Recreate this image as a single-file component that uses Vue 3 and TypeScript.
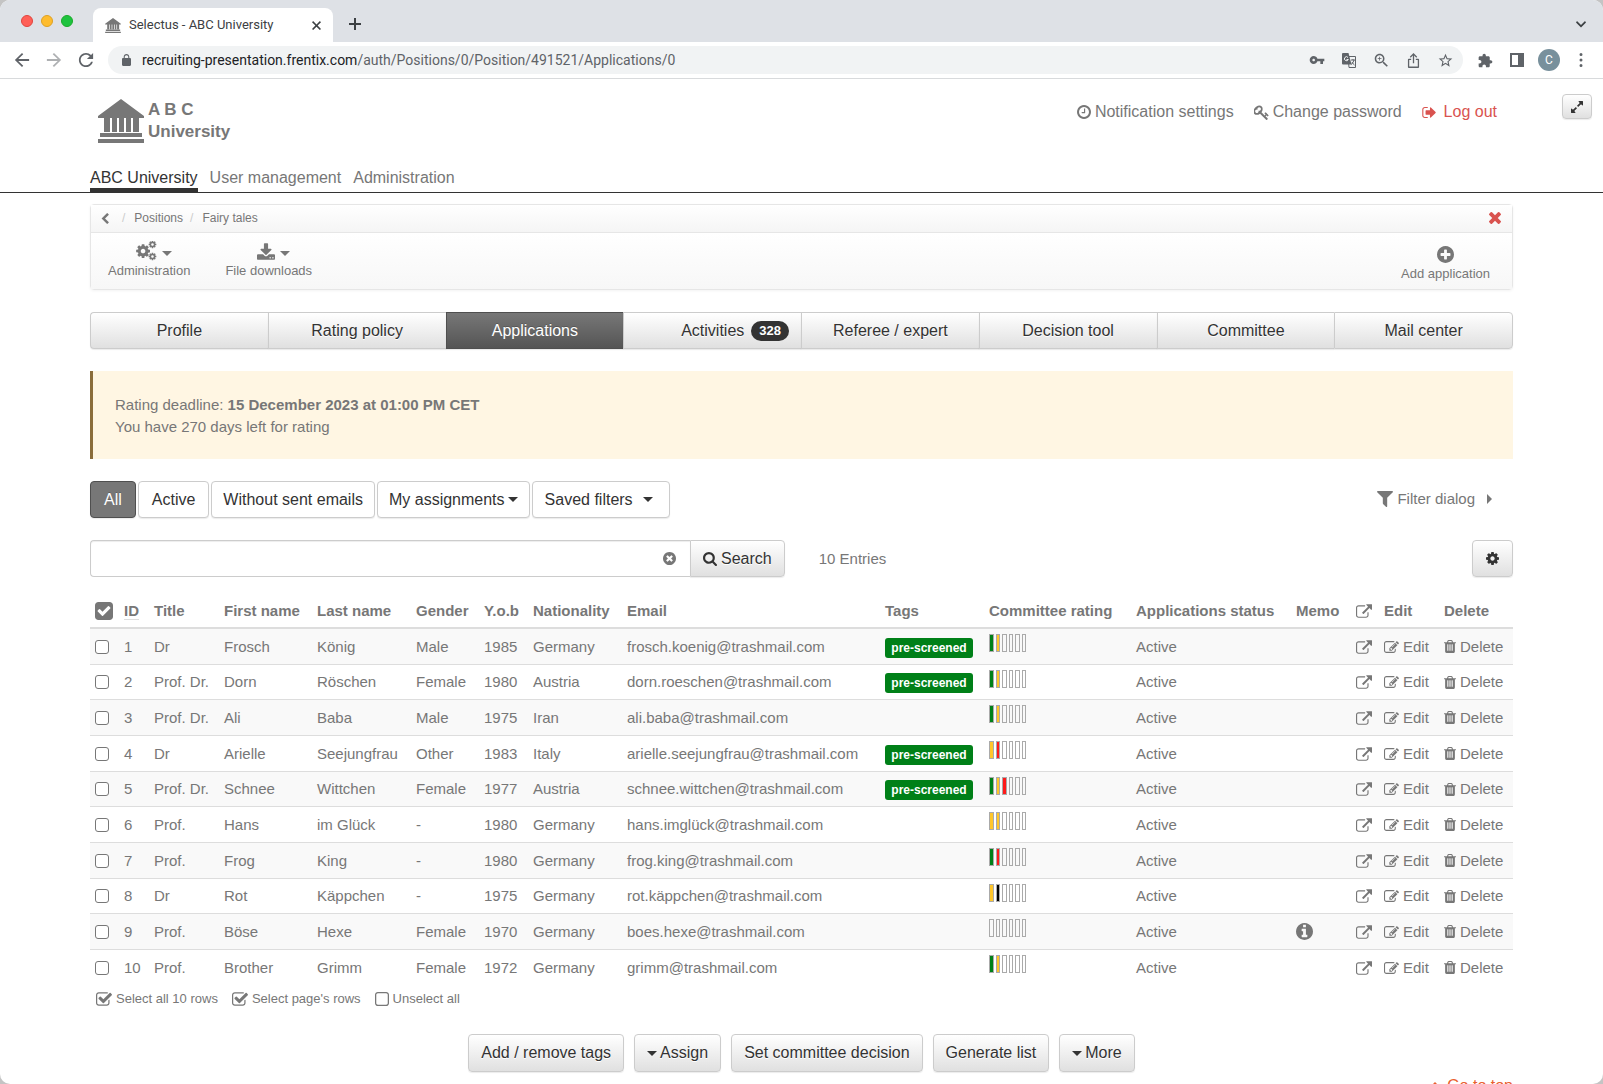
<script setup lang="ts">
import { h, ref } from 'vue'

interface Glyph {
  box: string
  path: string
}

interface Application {
  id: number
  title: string
  first: string
  last: string
  gender: string
  year: number
  nationality: string
  email: string
  tag: boolean
  rating: string[]
  memo: boolean
  selected: boolean
}

const disc = 'q0 209-103 385.5t-279.5 279.5-385.5 103-385.5-103-279.5-279.5-103-385.5 103-385.5 279.5-279.5 385.5-103 385.5 103 279.5 279.5 103 385.5z'

const gear = 'M1152 896q0-106-75-181t-181-75-181 75-75 181 75 181 181 75 181-75 75-181zm512-109v222q0 12-8 23t-20 13l-185 28q-19 54-39 91 35 50 107 138 10 12 10 25t-9 23q-27 37-99 108t-94 71q-12 0-26-9l-138-108q-44 23-91 38-16 136-29 186-7 28-36 28h-222q-14 0-24.5-8.5t-11.5-21.5l-28-184q-49-16-90-37l-141 107q-10 9-25 9-14 0-25-11-126-114-165-168-7-10-7-23 0-12 8-23 15-21 51-66.5t54-70.5q-27-50-41-99l-183-27q-13-2-21-12.5t-8-23.5v-222q0-12 8-23t19-13l186-28q14-46 39-92-40-57-107-138-10-12-10-24 0-10 9-23 26-36 98.5-107.5t94.5-71.5q13 0 26 10l138 107q44-23 91-38 16-136 29-186 7-28 36-28h222q14 0 24.5 8.5t11.5 21.5l28 184q49 16 90 37l142-107q9-9 24-9 13 0 25 10 129 119 165 170 7 8 7 22 0 12-8 23-15 21-51 66.5t-54 70.5q26 50 41 98l183 28q13 2 21 12.5t8 23.5z'

const glyphs: Record<string, Glyph> = {
  bank: { box: '0 0 46 44', path: 'M23 0L0 17v2h46v-2zM6 19h6v14H6zm8 0h5v14h-5zm7 0h5v14h-5zm7 0h5v14h-5zm7 0h6v14h-6zM2 34h42v4H2zM0 40h46v4H0z' },
  clock: { box: '128 128 1536 1536', path: 'M1024 544v448q0 14-9 23t-23 9h-320q-14 0-23-9t-9-23v-64q0-14 9-23t23-9h224v-352q0-14 9-23t23-9h64q14 0 23 9t9 23zm416 352q0-148-73-273t-198-198-273-73-273 73-198 198-73 273 73 273 198 198 273 73 273-73 198-198 73-273zm224 0' + disc },
  key: { box: '64 64 1664 1664', path: 'M832 512q0-80-56-136t-136-56-136 56-56 136q0 42 19 83-41-19-83-19-80 0-136 56t-56 136 56 136 136 56 136-56 56-136q0-42-19-83 41 19 83 19 80 0 136-56t56-136zm851 704q0 17-49 66t-66 49q-9 0-28.5-16t-36.5-33-38.5-40-24.5-26l-96 96 220 220q28 28 28 68 0 42-39 81t-81 39q-40 0-68-28l-671-671q-176 131-365 131-163 0-265.5-102.5t-102.5-265.5q0-160 95-313t248-248 313-95q163 0 265.5 102.5t102.5 265.5q0 189-131 365l355 355 96-96q-3-3-26-24.5t-40-38.5-33-36.5-16-28.5q0-17 49-66t66-49q13 0 23 10 6 6 46 44.5t82 79.5 86.5 86 73 78 28.5 41z' },
  signOut: { box: '64 256 1568 1280', path: 'M704 1440q0 4 1 20t.5 26.5-3 23.5-10 19.5-20.5 6.5h-320q-119 0-203.5-84.5t-84.5-203.5v-704q0-119 84.5-203.5t203.5-84.5h320q13 0 22.5 9.5t9.5 22.5q0 4 1 20t.5 26.5-3 23.5-10 19.5-20.5 6.5h-320q-66 0-113 47t-47 113v704q0 66 47 113t113 47h312l11.5 1 11.5 3 8 5.5 7 9 2 13.5zm928-544q0 26-19 45l-544 544q-19 19-45 19t-45-19-19-45v-288h-448q-26 0-45-19t-19-45v-384q0-26 19-45t45-19h448v-288q0-26 19-45t45-19 45 19l544 544q19 19 19 45z' },
  expand: { box: '128 128 1536 1536', path: 'M883 1056q0 13-10 23l-332 332 144 144q19 19 19 45t-19 45-45 19h-448q-26 0-45-19t-19-45v-448q0-26 19-45t45-19 45 19l144 144 332-332q10-10 23-10t23 10l114 114q10 10 10 23zm781-864v448q0 26-19 45t-45 19-45-19l-144-144-332 332q-10 10-23 10t-23-10l-114-114q-10-10-10-23t10-23l332-332-144-144q-19-19-19-45t19-45 45-19h448q26 0 45 19t19 45z' },
  chevronLeft: { box: '346 26 1100 1612', path: 'M1427 301l-531 531 531 531q19 19 19 45t-19 45l-166 166q-19 19-45 19t-45-19l-742-742q-19-19-19-45t19-45l742-742q19-19 45-19t45 19l166 166q19 19 19 45t-19 45z' },
  times: { box: '302 366 1188 1188', path: 'M1490 1322q0 40-28 68l-136 136q-28 28-68 28t-68-28l-294-294-294 294q-28 28-68 28t-68-28l-136-136q-28-28-28-68t28-68l294-294-294-294q-28-28-28-68t28-68l136-136q28-28 68-28t68 28l294 294 294-294q28-28 68-28t68 28l136 136q28 28 28 68t-28 68l-294 294 294 294q28 28 28 68z' },
  gear: { box: '128 128 1536 1536', path: gear },
  download: { box: '64 0 1664 1536', path: 'M1344 1344q0-26-19-45t-45-19-45 19-19 45 19 45 45 19 45-19 19-45zm256 0q0-26-19-45t-45-19-45 19-19 45 19 45 45 19 45-19 19-45zm128-224v320q0 40-28 68t-68 28h-1472q-40 0-68-28t-28-68v-320q0-40 28-68t68-28h465l135 136q58 56 136 56t136-56l136-136h464q40 0 68 28t28 68zm-325-569q17 41-14 70l-448 448q-18 19-45 19t-45-19l-448-448q-31-29-14-70 17-39 59-39h256v-448q0-26 19-45t45-19h256q26 0 45 19t19 45v448h256q42 0 59 39z' },
  plusCircle: { box: '128 128 1536 1536', path: 'M1344 960v-128q0-26-19-45t-45-19h-256v-256q0-26-19-45t-45-19h-128q-26 0-45 19t-19 45v256h-256q-26 0-45 19t-19 45v128q0 26 19 45t45 19h256v256q0 26 19 45t45 19h128q26 0 45-19t19-45v-256h256q26 0 45-19t19-45zm320-64' + disc },
  timesCircle: { box: '128 128 1536 1536', path: 'M1277 1122q0-26-19-45l-181-181 181-181q19-19 19-45 0-27-19-46l-90-90q-19-19-46-19-26 0-45 19l-181 181-181-181q-19-19-45-19-27 0-46 19l-90 90q-19 19-19 46 0 26 19 45l181 181-181 181q-19 19-19 45 0 27 19 46l90 90q19 19 46 19 26 0 45-19l181-181 181 181q19 19 45 19 27 0 46-19l90-90q19-19 19-46zm387-226' + disc },
  infoCircle: { box: '128 128 1536 1536', path: 'M1152 1376v-160q0-14-9-23t-23-9h-96v-512q0-14-9-23t-23-9h-320q-14 0-23 9t-9 23v160q0 14 9 23t23 9h96v320h-96q-14 0-23 9t-9 23v160q0 14 9 23t23 9h448q14 0 23-9t9-23zm-128-896v-160q0-14-9-23t-23-9h-192q-14 0-23 9t-9 23v160q0 14 9 23t23 9h192q14 0 23-9t9-23zm640 416' + disc },
  search: { box: '64 128 1664 1664', path: 'M1216 832q0-185-131.5-316.5t-316.5-131.5-316.5 131.5-131.5 316.5 131.5 316.5 316.5 131.5 316.5-131.5 131.5-316.5zm512 832q0 52-38 90t-90 38q-54 0-90-38l-343-342q-179 124-399 124-143 0-273.5-55.5t-225-150-150-225-55.5-273.5 55.5-273.5 150-225 225-150 273.5-55.5 273.5 55.5 225 150 150 225 55.5 273.5q0 220-124 399l343 343q37 37 37 90z' },
  filter: { box: '192 256 1408 1408', path: 'M1595 295q17 41-14 70l-493 493v742q0 42-39 59-13 5-25 5-27 0-45-19l-256-256q-19-19-19-45v-486l-493-493q-31-29-14-70 17-39 59-39h1280q42 0 59 39z' },
  external: { box: '0 0 1792 1536', path: 'M1408 928v320q0 119-84.5 203.5t-203.5 84.5h-832q-119 0-203.5-84.5t-84.5-203.5v-832q0-119 84.5-203.5t203.5-84.5h704q14 0 23 9t9 23v64q0 14-9 23t-23 9h-704q-66 0-113 47t-47 113v832q0 66 47 113t113 47h832q66 0 113-47t47-113v-320q0-14 9-23t23-9h64q14 0 23 9t9 23zm384-864v512q0 26-19 45t-45 19-45-19l-176-176-652 652q-10 10-23 10t-23-10l-114-114q-10-10-10-23t10-23l652-652-176-176q-19-19-19-45t19-45 45-19h512q26 0 45 19t19 45z' },
  edit: { box: '0 128 1792 1408', path: 'M888 1184l116-116-152-152-116 116v56h96v96h56zm440-720q-16-16-33 1l-350 350q-17 17-1 33t33-1l350-350q17-17 1-33zm80 594v190q0 119-84.5 203.5t-203.5 84.5h-832q-119 0-203.5-84.5t-84.5-203.5v-832q0-119 84.5-203.5t203.5-84.5h832q63 0 117 25 15 7 18 23 3 17-9 29l-49 49q-14 14-32 8-23-6-45-6h-832q-66 0-113 47t-47 113v832q0 66 47 113t113 47h832q66 0 113-47t47-113v-126q0-13 9-22l64-64q15-15 35-7t20 29zm-96-738l288 288-672 672h-288v-288zm444 132l-92 92-288-288 92-92q28-28 68-28t68 28l152 152q28 28 28 68t-28 68z' },
  trash: { box: '192 128 1408 1536', path: 'M704 1376v-704q0-14-9-23t-23-9h-64q-14 0-23 9t-9 23v704q0 14 9 23t23 9h64q14 0 23-9t9-23zm256 0v-704q0-14-9-23t-23-9h-64q-14 0-23 9t-9 23v704q0 14 9 23t23 9h64q14 0 23-9t9-23zm256 0v-704q0-14-9-23t-23-9h-64q-14 0-23 9t-9 23v704q0 14 9 23t23 9h64q14 0 23-9t9-23zm-544-992h448l-48-117q-7-9-17-11h-317q-10 2-17 11zm928 32v64q0 14-9 23t-23 9h-96v948q0 83-47 143.5t-113 60.5h-832q-66 0-113-58.5t-47-141.5v-952h-96q-14 0-23-9t-9-23v-64q0-14 9-23t23-9h309l70-167q15-37 54-63t79-26h320q40 0 79 26t54 63l70 167h309q14 0 23 9t9 23z' },
  checkSquare: { box: '128 128 1536 1536', path: 'M813 1299l614-614q19-19 19-45t-19-45l-102-102q-19-19-45-19t-45 19l-467 467-211-211q-19-19-45-19t-45 19l-102 102q-19 19-19 45t19 45l358 358q19 19 45 19t45-19zm851-883v960q0 119-84.5 203.5t-203.5 84.5h-960q-119 0-203.5-84.5t-84.5-203.5v-960q0-119 84.5-203.5t203.5-84.5h960q119 0 203.5 84.5t84.5 203.5z' },
  checkOutline: { box: '64 128 1664 1408', path: 'M1472 930v318q0 119-84.5 203.5t-203.5 84.5h-832q-119 0-203.5-84.5t-84.5-203.5v-832q0-119 84.5-203.5t203.5-84.5h832q63 0 117 25 15 7 18 23 3 17-9 29l-49 49q-10 10-23 10-3 0-9-2-23-6-45-6h-832q-66 0-113 47t-47 113v832q0 66 47 113t113 47h832q66 0 113-47t47-113v-254q0-13 9-22l64-64q10-10 23-10 6 0 12 3 20 8 20 29zm231-489l-814 814q-24 24-57 24t-57-24l-430-430q-24-24-24-57t24-57l110-110q24-24 57-24t57 24l263 263 647-647q24-24 57-24t57 24l110 110q24 24 24 57t-24 57z' },
  square: { box: '192 128 1408 1408', path: 'M1312 256h-832q-66 0-113 47t-47 113v832q0 66 47 113t113 47h832q66 0 113-47t47-113v-832q0-66-47-113t-113-47zm288 160v832q0 119-84.5 203.5t-203.5 84.5h-832q-119 0-203.5-84.5t-84.5-203.5v-832q0-119 84.5-203.5t203.5-84.5h832q119 0 203.5 84.5t84.5 203.5z' },
  chevronUp: { box: '0 0 12 8', path: 'M6 0l6 6-2 2-4-4-4 4-2-2z' },
  back: { box: '3 3 18 18', path: 'M20 11H7.83l5.59-5.59L12 4l-8 8 8 8 1.41-1.41L7.83 13H20v-2z' },
  forward: { box: '3 3 18 18', path: 'M4 11h12.17l-5.59-5.59L12 4l8 8-8 8-1.41-1.41L16.17 13H4v-2z' },
  reload: { box: '3 3 18 18', path: 'M17.65 6.35C16.2 4.9 14.21 4 12 4c-4.42 0-7.99 3.58-7.99 8s3.57 8 7.99 8c3.73 0 6.84-2.55 7.73-6h-2.08c-.82 2.33-3.04 4-5.65 4-3.31 0-6-2.69-6-6s2.69-6 6-6c1.66 0 3.14.69 4.22 1.78L13 11h7V4l-2.35 2.35z' },
  lock: { box: '4 1 16 21', path: 'M18 8h-1V6c0-2.76-2.24-5-5-5S7 3.24 7 6v2H6c-1.1 0-2 .9-2 2v10c0 1.1.9 2 2 2h12c1.1 0 2-.9 2-2V10c0-1.1-.9-2-2-2zm-2.9 0H8.9V6c0-1.71 1.39-3.1 3.1-3.1 1.71 0 3.1 1.39 3.1 3.1v2z' },
  password: { box: '0 0 24 24', path: 'M12.65 10C11.83 7.67 9.61 6 7 6c-3.31 0-6 2.69-6 6s2.69 6 6 6c2.61 0 4.83-1.67 5.65-4H17v4h4v-4h2v-4H12.65zM7 14c-1.1 0-2-.9-2-2s.9-2 2-2 2 .9 2 2-.9 2-2 2z' },
  zoom: { box: '2 2 20 20', path: 'M15.5 14h-.79l-.28-.27C15.41 12.59 16 11.11 16 9.5 16 5.91 13.09 3 9.5 3S3 5.91 3 9.5 5.91 16 9.5 16c1.61 0 3.09-.59 4.23-1.57l.27.28v.79l5 4.99L20.49 19l-4.99-5zm-6 0C7.01 14 5 11.99 5 9.5S7.01 5 9.5 5 14 7.01 14 9.5 11.99 14 9.5 14zm2.5-4h-2v2H9v-2H7V9h2V7h1v2h2v1z' },
  share: { box: '0 0 14 16', path: 'M7 0l4 4-1 1-2.300-2.300V11H6.300V2.700L4 5 3 4zM2 6h2.500v1.400H2.400v7h9.200v-7H9.500V6H12q1 0 1 1v8q0 1-1 1H2q-1 0-1-1V7q0-1 1-1z' },
  star: { box: '1 1 22 22', path: 'M22 9.24l-7.19-.62L12 2 9.19 8.63 2 9.24l5.46 4.73L5.82 21 12 17.27 18.18 21l-1.63-7.03L22 9.24zM12 15.4l-3.76 2.27 1-4.28-3.32-2.88 4.38-.38L12 6.1l1.71 4.04 4.38.38-3.32 2.88 1 4.28L12 15.4z' },
  puzzle: { box: '1 0 23 23', path: 'M20.5 11H19V7c0-1.1-.9-2-2-2h-4V3.5C13 2.12 11.88 1 10.5 1S8 2.12 8 3.5V5H4c-1.1 0-1.99.9-1.99 2v3.8H3.5c1.49 0 2.7 1.21 2.7 2.7s-1.21 2.7-2.7 2.7H2V20c0 1.1.9 2 2 2h3.8v-1.5c0-1.49 1.21-2.7 2.7-2.7 1.49 0 2.7 1.21 2.7 2.7V22H17c1.1 0 2-.9 2-2v-4h1.5c1.38 0 2.5-1.12 2.5-2.5S21.88 11 20.5 11z' },
  panel: { box: '0 0 14 14', path: 'M0 0h14v14H0zM2 2v10h6V2z' },
  dots: { box: '0 0 4 14', path: 'M2 0a1.500 1.500 0 1 1 0 3 1.500 1.500 0 0 1 0-3zM2 5.500a1.500 1.500 0 1 1 0 3 1.500 1.500 0 0 1 0-3zM2 11a1.500 1.500 0 1 1 0 3 1.500 1.500 0 0 1 0-3z' },
  close: { box: '0 0 8 8', path: 'M1 0l3 3 3-3 1 1-3 3 3 3-1 1-3-3-3 3-1-1 3-3-3-3z' },
  plus: { box: '0 0 12 12', path: 'M5 0h2v5h5v2H7v5H5V7H0V5h5z' },
  chevronDown: { box: '0 0 10 7', path: 'M1 0l4 4 4-4 1 1.500L5 6.500 0 1.500z' },
}

const Icon = (props: { name: string; w: number; h?: number }) => {
  const glyph = glyphs[props.name]
  return h(
    'svg',
    { viewBox: glyph.box, width: props.w, height: props.h ?? props.w, fill: 'currentColor', 'fill-rule': 'evenodd', 'aria-hidden': 'true' },
    [h('path', { d: glyph.path })],
  )
}
Icon.props = ['name', 'w', 'h']

const sections = ['ABC University', 'User management', 'Administration']

const tabs: { label: string; count?: number }[] = [
  { label: 'Profile' },
  { label: 'Rating policy' },
  { label: 'Applications' },
  { label: 'Activities', count: 328 },
  { label: 'Referee / expert' },
  { label: 'Decision tool' },
  { label: 'Committee' },
  { label: 'Mail center' },
]
const activeTab = ref('Applications')

const columns = [
  { key: 'check', width: 26 },
  { key: 'ID', width: 30 },
  { key: 'Title', width: 70 },
  { key: 'First name', width: 93 },
  { key: 'Last name', width: 99 },
  { key: 'Gender', width: 68 },
  { key: 'Y.o.b', width: 49 },
  { key: 'Nationality', width: 94 },
  { key: 'Email', width: 258 },
  { key: 'Tags', width: 104 },
  { key: 'Committee rating', width: 147 },
  { key: 'Applications status', width: 160 },
  { key: 'Memo', width: 60 },
  { key: 'open', width: 28 },
  { key: 'Edit', width: 60 },
  { key: 'Delete', width: 77 },
]

function row(id: number, title: string, first: string, last: string, gender: string, year: number, nationality: string, email: string, tag: boolean, votes: string[], memo = false): Application {
  const rating = [...votes, ...Array(6 - votes.length).fill('none')]
  return { id, title, first, last, gender, year, nationality, email: `${email}@trashmail.com`, tag, rating, memo, selected: false }
}

const applications = ref<Application[]>([
  row(1, 'Dr', 'Frosch', 'König', 'Male', 1985, 'Germany', 'frosch.koenig', true, ['green', 'yellow']),
  row(2, 'Prof. Dr.', 'Dorn', 'Röschen', 'Female', 1980, 'Austria', 'dorn.roeschen', true, ['green', 'yellow']),
  row(3, 'Prof. Dr.', 'Ali', 'Baba', 'Male', 1975, 'Iran', 'ali.baba', false, ['green', 'yellow']),
  row(4, 'Dr', 'Arielle', 'Seejungfrau', 'Other', 1983, 'Italy', 'arielle.seejungfrau', true, ['yellow', 'red']),
  row(5, 'Prof. Dr.', 'Schnee', 'Wittchen', 'Female', 1977, 'Austria', 'schnee.wittchen', true, ['green', 'yellow', 'red']),
  row(6, 'Prof.', 'Hans', 'im Glück', '-', 1980, 'Germany', 'hans.imglück', false, ['yellow', 'yellow']),
  row(7, 'Prof.', 'Frog', 'King', '-', 1980, 'Germany', 'frog.king', false, ['green', 'red']),
  row(8, 'Dr', 'Rot', 'Käppchen', '-', 1975, 'Germany', 'rot.käppchen', false, ['yellow', 'black']),
  row(9, 'Prof.', 'Böse', 'Hexe', 'Female', 1970, 'Germany', 'boes.hexe', false, [], true),
  row(10, 'Prof.', 'Brother', 'Grimm', 'Female', 1972, 'Germany', 'grimm', false, ['green', 'yellow']),
])

const query = ref('')

function selectAll(value: boolean) {
  applications.value.forEach((item) => (item.selected = value))
}
</script>

<template>
  <div class="window">
    <div class="tab-strip">
      <div class="lights"><i class="red"></i><i class="amber"></i><i class="green"></i></div>
      <div class="browser-tab">
        <Icon class="favicon" name="bank" :w="16" :h="15" />
        <span class="tab-title">Selectus - ABC University</span>
        <button class="bare" aria-label="Close tab"><Icon name="close" :w="9" /></button>
      </div>
      <button class="bare new-tab" aria-label="New tab"><Icon name="plus" :w="12" /></button>
      <button class="bare tab-list" aria-label="Search tabs"><Icon name="chevronDown" :w="10" :h="7" /></button>
    </div>

    <div class="address-bar">
      <button class="bare tool" aria-label="Back"><Icon name="back" :w="16" /></button>
      <button class="bare tool dim" aria-label="Forward"><Icon name="forward" :w="16" /></button>
      <button class="bare tool" aria-label="Reload"><Icon name="reload" :w="16" /></button>
      <div class="url">
        <Icon class="lock" name="lock" :w="9" :h="12" />
        <span class="address"><b>recruiting-presentation.frentix.com</b>/auth/Positions/0/Position/491521/Applications/0</span>
        <button class="bare tool" aria-label="Passwords"><Icon name="password" :w="16" /></button>
        <button class="bare tool" aria-label="Translate">
          <svg width="14" height="15" viewBox="0 0 14 15" aria-hidden="true">
            <path d="M6 3.500h7.500v11H7z" fill="none" stroke="#5f6368" />
            <path d="M1 0h5.500l3 11.500H1q-1 0-1-1V1q0-1 1-1z" fill="#5f6368" />
            <path d="M6 4.500A2 2 0 1 0 6.300 6.500H4.500" fill="none" stroke="#f1f3f4" />
            <path d="M9 7h4M11 6v1m1 0q-.5 3-3 4.500M10 9q1 2 2.500 3" fill="none" stroke="#5f6368" />
          </svg>
        </button>
        <button class="bare tool" aria-label="Zoom"><Icon name="zoom" :w="15" /></button>
        <button class="bare tool" aria-label="Share"><Icon name="share" :w="13" :h="15" /></button>
        <button class="bare tool" aria-label="Bookmark"><Icon name="star" :w="15" /></button>
      </div>
      <button class="bare tool" aria-label="Extensions"><Icon name="puzzle" :w="15" /></button>
      <button class="bare tool" aria-label="Side panel"><Icon name="panel" :w="14" /></button>
      <button class="bare tool" aria-label="Profile"><span class="avatar">C</span></button>
      <button class="bare tool" aria-label="Menu"><Icon name="dots" :w="4" :h="14" /></button>
    </div>

    <header>
      <div class="masthead">
        <a class="logo" href="#">
          <Icon name="bank" :w="46" :h="44" />
          <span class="logo-text">A B C<br />University</span>
        </a>
        <div class="account">
          <a href="#"><Icon name="clock" :w="14" />Notification settings</a>
          <a href="#"><Icon name="key" :w="15" />Change password</a>
          <a class="danger" href="#"><Icon name="signOut" :w="14" :h="11" />Log out</a>
        </div>
        <button class="btn fullscreen" aria-label="Full screen"><Icon name="expand" :w="12" /></button>
      </div>
      <nav class="sections">
        <a v-for="(section, i) in sections" :key="section" href="#" :class="{ current: i === 0 }">{{ section }}</a>
      </nav>
    </header>

    <main>
      <section class="toolbox">
        <div class="crumbs">
          <a href="#" aria-label="Back"><Icon name="chevronLeft" :w="8" :h="11" /></a>
          <i class="slash first">/</i><a href="#">Positions</a>
          <i class="slash">/</i><a href="#">Fairy tales</a>
          <button class="bare dismiss" aria-label="Close"><Icon name="times" :w="12" /></button>
        </div>
        <div class="tools">
          <button class="bare">
            <span class="tool-icon menu">
              <svg width="21" height="20" viewBox="0 0 21 20" fill="currentColor" fill-rule="evenodd" aria-hidden="true">
                <path :d="gear" transform="translate(-1 2) scale(0.009)" />
                <path :d="gear" transform="translate(12 -1) scale(0.005)" />
                <path :d="gear" transform="translate(12 11) scale(0.005)" />
              </svg>
              <i class="caret"></i>
            </span>
            Administration
          </button>
          <button class="bare">
            <span class="tool-icon menu"><Icon name="download" :w="18" :h="17" /><i class="caret"></i></span>
            File downloads
          </button>
          <button class="bare add">
            <span class="tool-icon"><Icon name="plusCircle" :w="17" /></span>
            Add application
          </button>
        </div>
      </section>

      <nav class="tabs">
        <button
          v-for="tab in tabs"
          :key="tab.label"
          class="btn"
          :class="{ active: tab.label === activeTab, counted: tab.count }"
          @click="activeTab = tab.label"
        >
          {{ tab.label }}<span v-if="tab.count" class="count">{{ tab.count }}</span>
        </button>
      </nav>

      <p class="notice">
        Rating deadline: <strong>15 December 2023 at 01:00 PM CET</strong><br />
        You have 270 days left for rating
      </p>

      <div class="filters">
        <button class="btn flat short active">All</button>
        <button class="btn flat short">Active</button>
        <button class="btn flat">Without sent emails</button>
        <button class="btn flat">My assignments<i class="caret near"></i></button>
        <button class="btn flat saved">Saved filters<i class="caret"></i></button>
        <button class="bare dialog"><Icon name="filter" :w="16" />Filter dialog<i class="caret right"></i></button>
      </div>

      <form class="search" @submit.prevent>
        <div class="field">
          <input v-model="query" type="text" aria-label="Search applications" />
          <button class="bare clear" type="button" aria-label="Clear" @click="query = ''"><Icon name="timesCircle" :w="13" /></button>
        </div>
        <button class="btn submit" type="submit"><Icon name="search" :w="14" />Search</button>
        <span class="entries">10 Entries</span>
        <button class="btn settings" type="button" aria-label="Table settings"><Icon name="gear" :w="13" /></button>
      </form>

      <table>
        <colgroup>
          <col v-for="column in columns" :key="column.key" :style="{ width: column.width + 'px' }" />
        </colgroup>
        <thead>
          <tr>
            <th v-for="column in columns" :key="column.key" scope="col">
              <button v-if="column.key === 'check'" class="bare toggle" aria-label="Toggle all" @click="selectAll(true)"><Icon name="checkSquare" :w="18" /></button>
              <Icon v-else-if="column.key === 'open'" name="external" :w="16" :h="14" />
              <a v-else-if="column.key === 'ID'" class="sort" href="#">ID</a>
              <template v-else>{{ column.key }}</template>
            </th>
          </tr>
        </thead>
        <tbody>
          <tr v-for="item in applications" :key="item.id">
            <td><input v-model="item.selected" type="checkbox" :aria-label="`Select ${item.first} ${item.last}`" /></td>
            <td>{{ item.id }}</td>
            <td>{{ item.title }}</td>
            <td>{{ item.first }}</td>
            <td>{{ item.last }}</td>
            <td>{{ item.gender }}</td>
            <td>{{ item.year }}</td>
            <td>{{ item.nationality }}</td>
            <td>{{ item.email }}</td>
            <td class="tag-cell"><span v-if="item.tag" class="tag">pre-screened</span></td>
            <td class="rating-cell">
              <div class="rating"><i v-for="(vote, i) in item.rating" :key="i" :class="vote"></i></div>
            </td>
            <td>Active</td>
            <td><Icon v-if="item.memo" name="infoCircle" :w="17" /></td>
            <td><a href="#" aria-label="Open"><Icon name="external" :w="16" :h="14" /></a></td>
            <td><a href="#"><Icon name="edit" :w="15" :h="12" />Edit</a></td>
            <td><a href="#"><Icon name="trash" :w="12" :h="13" />Delete</a></td>
          </tr>
        </tbody>
      </table>

      <div class="selection">
        <button class="bare" @click="selectAll(true)"><Icon name="checkOutline" :w="16" :h="14" />Select all 10 rows</button>
        <button class="bare" @click="selectAll(true)"><Icon name="checkOutline" :w="16" :h="14" />Select page's rows</button>
        <button class="bare" @click="selectAll(false)"><Icon name="square" :w="14" />Unselect all</button>
      </div>

      <div class="bulk">
        <button class="btn">Add / remove tags</button>
        <button class="btn"><i class="caret lead"></i>Assign</button>
        <button class="btn">Set committee decision</button>
        <button class="btn">Generate list</button>
        <button class="btn"><i class="caret lead"></i>More</button>
      </div>

      <footer><a href="#"><Icon name="chevronUp" :w="12" :h="8" />Go to top</a></footer>
    </main>
  </div>
</template>

<style>
body {
  margin: 0;
  background: #c4c4c4;
}
</style>

<style scoped>
.window {
  height: 100vh;
  overflow: hidden;
  border-radius: 10px;
  background: #fff;
  color: #777;
  font: 15px/22px "Liberation Sans", Arial, sans-serif;
}
.window * {
  box-sizing: border-box;
}
a {
  color: inherit;
  text-decoration: none;
}
button {
  color: inherit;
  font: inherit;
  white-space: nowrap;
}
svg {
  flex: none;
}
.bare {
  display: inline-flex;
  align-items: center;
  padding: 0;
  border: 0;
  background: none;
}

/* Browser frame */
.tab-strip {
  display: flex;
  height: 42px;
  background: #dee1e6;
  color: #3c4043;
  font: 13px/16px Roboto, sans-serif;
}
.lights {
  display: flex;
  gap: 8px;
  padding: 15px 20px 0 21px;
}
.lights i {
  width: 12px;
  height: 12px;
  border: 1px solid #e0443e;
  border-radius: 50%;
  background: #ff5f57;
}
.lights .amber {
  border-color: #dea123;
  background: #febc2e;
}
.lights .green {
  border-color: #1aab29;
  background: #1ec33f;
}
.browser-tab {
  display: flex;
  align-items: center;
  width: 240px;
  margin-top: 8px;
  padding: 0 12px;
  border-radius: 8px 8px 0 0;
  background: #fff;
}
.favicon {
  color: #777;
}
.tab-title {
  flex: 1;
  padding-left: 8px;
}
.new-tab {
  margin: 6px 0 0 16px;
}
.tab-list {
  margin: 7px 17px 0 auto;
}
.address-bar {
  display: flex;
  align-items: center;
  height: 37px;
  padding: 0 6px;
  border-bottom: 1px solid #d8dadc;
  color: #5f6368;
  font: 14px/20px Roboto, sans-serif;
}
.tool {
  justify-content: center;
  flex: none;
  width: 32px;
  height: 28px;
}
.dim {
  opacity: 0.5;
}
.url {
  display: flex;
  flex: 1;
  align-items: center;
  height: 28px;
  margin: 0 6px;
  padding: 0 2px 0 14px;
  border-radius: 14px;
  background: #f1f3f4;
}
.address {
  flex: 1;
  padding-left: 11px;
}
.address b {
  color: #202124;
  font-weight: 400;
}
.avatar {
  width: 22px;
  height: 22px;
  border-radius: 50%;
  background: #78909c;
  color: #fff;
  font-size: 12px;
  line-height: 22px;
}

/* Site header */
header {
  border-bottom: 1px solid #333;
  font-size: 16px;
}
.masthead {
  display: flex;
  align-items: flex-start;
  padding: 15px 11px 0 98px;
}
.logo {
  display: flex;
  gap: 4px;
  margin: 5px auto 24px 0;
}
.logo-text {
  font: bold 17px/22px "Liberation Sans", sans-serif;
}
.account {
  display: flex;
  gap: 20px;
  margin: 7px 65px 0 0;
}
.account a {
  display: flex;
  align-items: center;
  gap: 4px;
}
.account .danger {
  gap: 8px;
  color: #d9534f;
}
.sections {
  display: flex;
  gap: 12px;
  padding: 0 90px;
}
.sections a {
  border-bottom: 4px solid transparent;
  line-height: 21px;
}
.sections .current {
  border-color: #333;
  color: #333;
}

/* Buttons */
.btn {
  display: inline-flex;
  align-items: center;
  justify-content: center;
  height: 37px;
  padding: 0 12px;
  border: 1px solid #ccc;
  border-radius: 4px;
  background: linear-gradient(#fff, #e0e0e0);
  box-shadow: 0 1px 1px rgba(0, 0, 0, 0.08);
  color: #333;
  font-size: 16px;
  text-shadow: 0 1px 0 #fff;
}
.btn.flat {
  background: #fff;
}
.btn.active {
  border-color: #4f4f4f;
  background: linear-gradient(#777, #555);
  color: #fff;
  text-shadow: 0 -1px 0 rgba(0, 0, 0, 0.2);
}
.btn.flat.active {
  background: #777;
}
.btn.fullscreen {
  width: 30px;
  height: 25px;
  padding: 0;
}
.caret {
  width: 0;
  margin-left: 10px;
  border: 5px solid transparent;
  border-top-color: currentColor;
  border-bottom: 0;
}
.caret.near {
  margin-left: 3px;
}
.caret.lead {
  margin: 0 3px 0 0;
}
.caret.right {
  margin-left: 12px;
  border: 5px solid transparent;
  border-left-color: currentColor;
  border-right: 0;
}

main {
  padding: 11px 90px 0;
}

/* Breadcrumb and tools */
.toolbox {
  border: 1px solid #e6e6e6;
  border-radius: 4px;
  box-shadow: 0 1px 3px rgba(0, 0, 0, 0.05);
}
.crumbs {
  display: flex;
  align-items: center;
  height: 28px;
  padding: 0 11px 1px 10px;
  border-bottom: 1px solid #e6e6e6;
  background: linear-gradient(#fff, #f5f5f5);
  font-size: 12px;
}
.crumbs a {
  display: flex;
}
.slash {
  padding: 0 9px 0 7px;
  color: #ccc;
  font-style: normal;
}
.slash.first {
  padding: 0 9px 0 13px;
}
.dismiss {
  margin-left: auto;
  color: #d9534f;
}
.tools {
  display: flex;
  gap: 35px;
  height: 56px;
  padding: 7px 22px 0 17px;
  background: linear-gradient(#fff, #f7f7f7);
}
.tools button {
  flex-direction: column;
  height: 42px;
  font-size: 13px;
  line-height: 18px;
}
.tools .add {
  margin: 3px 0 0 auto;
}
.tool-icon {
  display: flex;
  align-items: center;
  height: 22px;
}
.tool-icon.menu {
  padding-left: 10px;
}
.tool-icon .caret {
  margin: 4px 0 0 5px;
}

.tabs {
  display: flex;
  margin-top: 22px;
}
.tabs .btn {
  flex: 1 1 0;
  border-right-width: 0;
  border-radius: 0;
}
.tabs .btn:first-child {
  border-radius: 4px 0 0 4px;
}
.tabs .btn:last-child {
  border-right-width: 1px;
  border-radius: 0 4px 4px 0;
}
.tabs .counted {
  justify-content: flex-end;
}
.count {
  margin-left: 7px;
  padding: 0 8px;
  border-radius: 10px;
  background: #333;
  color: #fff;
  font-size: 13px;
  font-weight: bold;
  line-height: 20px;
  text-shadow: none;
}

.notice {
  margin: 22px 0;
  padding: 23px 22px 21px;
  border-left: 3px solid #8a6d3b;
  background: #fff6e3;
}

.filters {
  display: flex;
  gap: 2px;
}
.filters .btn {
  padding: 0 11px;
}
.filters .short {
  padding: 0 13px;
}
.filters .saved {
  padding: 0 16px 0 12px;
}
.dialog {
  gap: 4px;
  margin-left: auto;
  padding: 0 21px 2px 0;
}
.dialog .caret {
  margin-left: 8px;
}

.search {
  display: flex;
  margin-top: 22px;
}
.field {
  position: relative;
  width: 600px;
}
.field input {
  width: 100%;
  height: 37px;
  padding: 0 36px 0 12px;
  border: 1px solid #ccc;
  border-right: 0;
  border-radius: 4px 0 0 4px;
  color: #555;
  font: inherit;
  box-shadow: inset 0 1px 1px rgba(0, 0, 0, 0.075);
}
.clear {
  position: absolute;
  top: 0;
  right: 14px;
  height: 37px;
}
.submit {
  gap: 4px;
  border-radius: 0 4px 4px 0;
}
.entries {
  padding: 8px 34px;
}
.settings {
  width: 41px;
  margin-left: auto;
  padding: 0;
}

/* Applications table */
table {
  width: 100%;
  margin-top: 17px;
  border-collapse: separate;
  border-spacing: 0;
  table-layout: fixed;
}
th,
td {
  padding: 0 0 0 8px;
  text-align: left;
  white-space: nowrap;
}
th {
  height: 34px;
  border-bottom: 2px solid #ddd;
}
td {
  height: 36px;
  border-top: 1px solid #ddd;
}
tr:first-child td {
  height: 35px;
  border-top: 0;
}
tr:nth-child(3n + 2) td {
  height: 35px;
}
tbody tr:nth-child(odd) {
  background: #f9f9f9;
}
th:first-child,
td:first-child {
  padding-left: 5px;
}
th svg,
td svg {
  display: block;
}
td a {
  display: flex;
  align-items: center;
  gap: 4px;
}
.toggle {
  display: flex;
}
.sort {
  border-bottom: 1px solid #ddd;
}
td input {
  display: block;
  width: 14px;
  height: 14px;
  margin: 0;
  border: 1px solid #777;
  border-radius: 3px;
  background: #fff;
  appearance: none;
}
td input:checked {
  background: #777;
}
.tag-cell {
  padding-top: 2px;
}
.tag {
  display: block;
  width: 88px;
  border-radius: 3px;
  background: #008018;
  color: #fff;
  font-size: 12px;
  font-weight: bold;
  line-height: 20px;
  text-align: center;
}
.rating-cell {
  padding-top: 5px;
  vertical-align: top;
}
.rating {
  display: flex;
  gap: 2px;
}
.rating i {
  width: 4px;
  height: 18px;
  border: 1px solid #aaa;
}
.rating i:nth-child(odd) {
  width: 5px;
}
.rating .green {
  background: #008018;
}
.rating .yellow {
  background: #ffc62b;
}
.rating .red {
  background: #ff1a1a;
}
.rating .black {
  background: #000;
}

.selection {
  display: flex;
  gap: 14px;
  margin-top: 3px;
  padding-left: 6px;
  font-size: 13px;
}
.selection button {
  gap: 4px;
}
.bulk {
  display: flex;
  justify-content: center;
  gap: 10px;
  margin-top: 24px;
}
.bulk .btn {
  height: 38px;
}
footer {
  display: flex;
  justify-content: flex-end;
  margin-top: 3px;
  color: #e9602f;
  font-size: 16px;
}
footer a {
  display: flex;
  align-items: center;
  gap: 6px;
}
</style>
